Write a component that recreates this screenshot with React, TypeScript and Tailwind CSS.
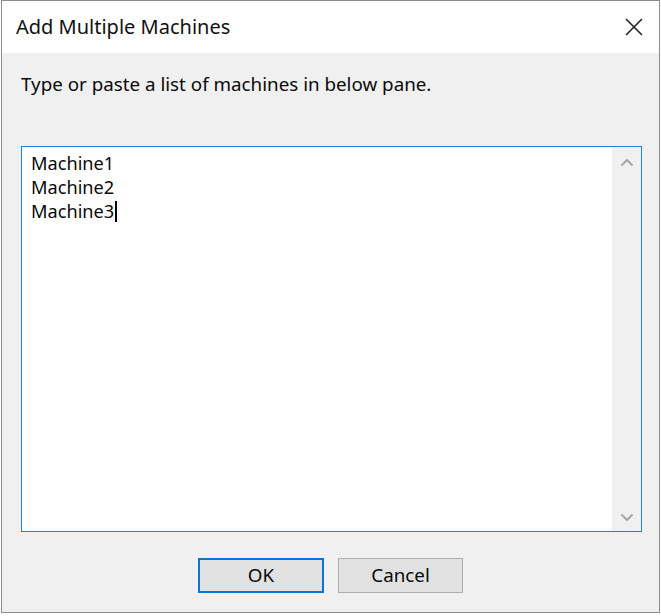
import React from "react"

const font = { fontFamily: '"Noto Sans", "Open Sans", Arial, sans-serif' }

function Chevron({ dir }: { dir: "up" | "down" }) {
  return (
    <svg width="14" height="9" viewBox="0 0 14 9" className="text-[#a6a6a6]">
      <path
        d={dir === "up" ? "M1.5 7.5 L7 2 L12.5 7.5" : "M1.5 1.5 L7 7 L12.5 1.5"}
        fill="none"
        stroke="currentColor"
        strokeWidth="2"
      />
    </svg>
  )
}

export default function App() {
  const machines = ["Machine1", "Machine2", "Machine3"]

  return (
    <div className="w-[661px] h-[616px] bg-white overflow-hidden" style={font}>
      <div className="ml-[1px] w-[659px] h-[613px] border border-[#8c8c8c] flex flex-col">
        {/* title bar */}
        <div className="h-[52px] bg-white flex items-center justify-between pl-[14px] pr-[15px] shrink-0">
          <span className="text-[20px] text-[#111]">Add Multiple Machines</span>
          <svg width="20" height="20" viewBox="0 0 20 20" className="text-[#222]">
            <path d="M2 2 L18 18 M18 2 L2 18" stroke="currentColor" strokeWidth="1.6" fill="none" />
          </svg>
        </div>

        {/* body */}
        <div className="flex-1 bg-[#f0f0f0] flex flex-col">
          <p className="mt-[19px] ml-[19px] text-[18.8px] leading-[24px] text-[#0a0a0a]">
            Type or paste a list of machines in below pane.
          </p>

          <div className="mt-[50px] ml-[19px] w-[621px] h-[386px] border-[1.5px] border-[#2180d8] bg-white flex">
            <div className="flex-1 pl-[9px] pt-[4px] text-[18.2px] leading-[24px] text-[#0a0a0a]">
              {machines.map((m, i) => (
                <div key={m} className="flex items-center">
                  <span>{m}</span>
                  {i === machines.length - 1 && (
                    <span className="inline-block w-[1.5px] h-[21px] bg-black ml-[1px]" />
                  )}
                </div>
              ))}
            </div>
            <div className="w-[29px] bg-[#f0f0f0] flex flex-col items-center justify-between pt-[11px] pb-[9px]">
              <Chevron dir="up" />
              <Chevron dir="down" />
            </div>
          </div>

          <div className="mt-[26px] flex justify-center gap-[14px]">
            <button className="w-[126px] h-[35px] bg-[#e1e1e1] border-2 border-[#0a74d4] text-[18.8px] text-[#0a0a0a]">
              OK
            </button>
            <button className="w-[125px] h-[35px] bg-[#e1e1e1] border border-[#adadad] text-[18.8px] text-[#0a0a0a]">
              Cancel
            </button>
          </div>
        </div>
      </div>
    </div>
  )
}
